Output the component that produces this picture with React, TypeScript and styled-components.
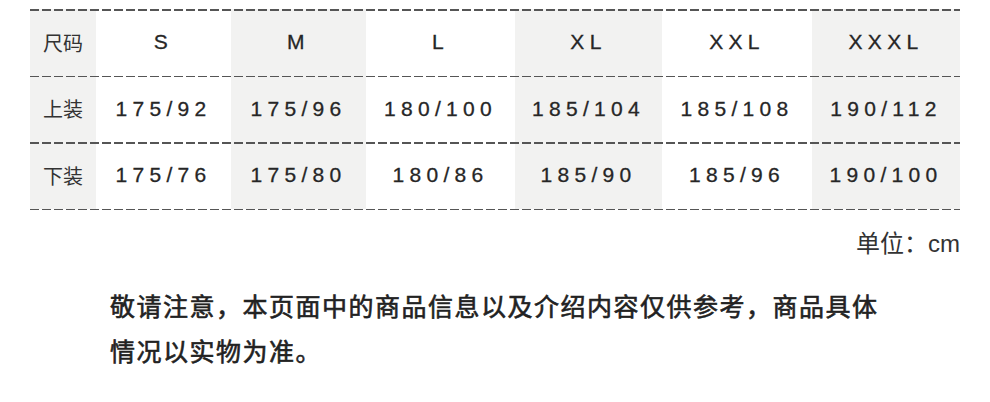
import React from "react";
import styled, { createGlobalStyle } from "styled-components";

const GlobalStyle = createGlobalStyle`
  body {
    margin: 0;
    background: #fff;
    font-family: "Liberation Sans", "Noto Sans CJK SC", sans-serif;
    color: #333;
  }
`;

const sizes = ["S", "M", "L", "XL", "XXL", "XXXL"];

const rows = [
  { label: "上装", values: ["175/92", "175/96", "180/100", "185/104", "185/108", "190/112"] },
  { label: "下装", values: ["175/76", "175/80", "180/86", "185/90", "185/96", "190/100"] },
];

const dash = `repeating-linear-gradient(to right, #555 0 9px, transparent 9px 12px)`;

const Page = styled.div`
  width: 990px;
  height: 402px;
  padding: 9px 30px 0 30px;
  box-sizing: border-box;
`;

const Table = styled.div`
  width: 930px;
  background-image: ${dash};
  background-size: 100% 1.5px;
  background-position: left bottom;
  background-repeat: no-repeat;
  padding-bottom: 1.5px;
`;

const Row = styled.div`
  display: grid;
  grid-template-columns: 66px 135px 135px 149px 147px 150px 148px;
  height: 66.5px;
  position: relative;

  &::before {
    content: "";
    position: absolute;
    left: 0;
    right: 0;
    top: 0;
    height: 1.5px;
    background-image: ${dash};
  }
`;

const Cell = styled.div<{ $shade: boolean }>`
  display: flex;
  align-items: center;
  justify-content: center;
  background: ${(p) => (p.$shade ? "#f2f2f1" : "#fff")};
  font-size: 21px;
  letter-spacing: 5.3px;
  color: #262626;
  -webkit-text-stroke: 0.3px #262626;
`;

const LabelCell = styled(Cell)`
  font-family: "Noto Sans CJK SC", sans-serif;
  font-size: 20px;
  letter-spacing: 0;
  -webkit-text-stroke: 0;
  color: #333;
`;

const Unit = styled.div`
  text-align: right;
  font-size: 24px;
  line-height: 30px;
  margin-top: 17px;
  font-family: "Noto Sans CJK SC", sans-serif;
  color: #333;

  span {
    font-family: "Liberation Sans", sans-serif;
  }
`;

const Notice = styled.p`
  margin: 24px 0 0 80px;
  width: 780px;
  font-family: "Noto Sans CJK SC", sans-serif;
  font-size: 25px;
  font-weight: 400;
  letter-spacing: 1.5px;
  line-height: 45px;
  color: #222;
  -webkit-text-stroke: 0.6px #222;
`;

export default function App() {
  return (
    <Page>
      <GlobalStyle />
      <Table>
        <Row>
          <LabelCell $shade>尺码</LabelCell>
          {sizes.map((s, i) => (
            <Cell key={s} $shade={i % 2 === 1}>
              {s}
            </Cell>
          ))}
        </Row>
        {rows.map((r) => (
          <Row key={r.label}>
            <LabelCell $shade>{r.label}</LabelCell>
            {r.values.map((v, i) => (
              <Cell key={i} $shade={i % 2 === 1}>
                {v}
              </Cell>
            ))}
          </Row>
        ))}
      </Table>
      <Unit>
        单位：<span>cm</span>
      </Unit>
      <Notice>
        敬请注意，本页面中的商品信息以及介绍内容仅供参考，商品具体情况以实物为准。
      </Notice>
    </Page>
  );
}
